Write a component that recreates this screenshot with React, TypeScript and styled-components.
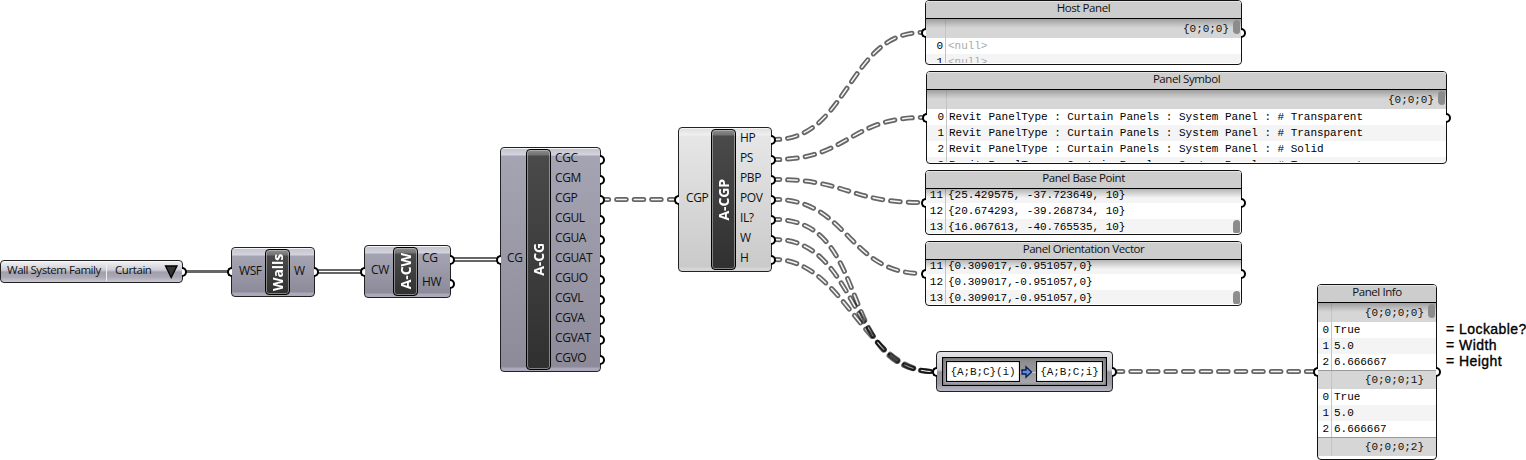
import React from "react";
import styled, { createGlobalStyle, css } from "styled-components";

const Global = createGlobalStyle`
  * { box-sizing: border-box; }
  body { margin: 0; background: #fff; overflow: hidden; }
`;

const Canvas = styled.main`
  position: relative;
  width: 1526px;
  height: 460px;
  overflow: hidden;
  background: #fff;
  color: #111;
  font: 11.5px/16px "Open Sans", "Noto Sans", sans-serif;
`;

const Wires = styled.svg`
  position: absolute;
  inset: 0;
`;

type Box = { $x: number; $y: number; $w: number; $h: number };

const placed = css<Box>`
  position: absolute;
  left: ${(p) => p.$x}px;
  top: ${(p) => p.$y}px;
  width: ${(p) => p.$w}px;
  height: ${(p) => p.$h}px;
`;

const violet = `linear-gradient(#c3c3cf 0, #d4d4de 7px, #a5a4b2 8px, #8d8b99 calc(100% - 4px), #aba9ba calc(100% - 3px))`;
const silver = `linear-gradient(#dedede 0, #f0f0f0 7px, #e6e6e6 8px, #cacaca calc(100% - 4px), #d6d6d6 calc(100% - 3px))`;

const Node = styled.section<Box & { $light?: boolean }>`
  ${placed}
  display: flex;
  border: 1px solid #222;
  border-radius: 4px;
  background: ${(p) => (p.$light ? silver : violet)};
  box-shadow: inset 0 1px 0 #f4f4f6;
`;

const Inputs = styled.div<{ $w: number }>`
  width: ${(p) => p.$w}px;
  display: flex;
  flex-direction: column;
  justify-content: center;
`;

const Outputs = styled.div`
  flex: 1;
  display: flex;
  flex-direction: column;
  justify-content: center;
`;

const PortRow = styled.div<{ $h: number; $pad: number }>`
  position: relative;
  height: ${(p) => p.$h}px;
  padding: 0 0 3px ${(p) => p.$pad}px;
  display: flex;
  align-items: center;
  font-size: 12px;
  letter-spacing: -0.4px;
`;

const Grip = styled.i<{ $side: "in" | "out"; $y?: string }>`
  position: absolute;
  top: calc(${(p) => p.$y ?? "50%"} - 5px);
  ${(p) => (p.$side === "in" ? "left: -5px;" : "right: -5px;")}
  width: 5px;
  height: 10px;
  border: 2px solid #000;
  background: #fff;
  ${(p) =>
    p.$side === "in"
      ? "border-right: 0; border-radius: 5px 0 0 5px;"
      : "border-left: 0; border-radius: 0 5px 5px 0;"}
`;

const Plate = styled.div`
  width: 25px;
  margin: 1px 0;
  display: flex;
  align-items: center;
  justify-content: center;
  border: 1px solid #000;
  border-radius: 4px;
  background: linear-gradient(#8d8d8d 0, #727272 5px, #4a4a4a 6px, #303030 100%);
  box-shadow: inset 0 0 0 1px rgba(200, 200, 200, 0.55);
  color: #fff;
`;

const PlateName = styled.span`
  writing-mode: vertical-rl;
  transform: rotate(180deg);
  font-size: 14px;
  font-weight: 700;
  line-height: 20px;
  letter-spacing: -0.1px;
  white-space: nowrap;
`;

const ValueList = styled.section<Box>`
  ${placed}
  display: flex;
  align-items: center;
  border: 1px solid #222;
  border-radius: 4px;
  background: linear-gradient(#f2f2f5 0, #cdcdd4 9px, #b9b9c2 10px, #a09fab 11px, #aaa8b5 16px, #cac9d2 21px);
  box-shadow: inset 0 1px 0 #fafafa;
`;

const ListName = styled.span`
  width: 106px;
  height: 19px;
  padding: 0 0 0 6px;
  border-right: 1px solid #eee;
  white-space: nowrap;
  letter-spacing: -0.46px;
`;

const ListValue = styled.span`
  width: 57px;
  height: 19px;
  padding: 0 0 0 8px;
  letter-spacing: -0.42px;
`;

const PanelBox = styled.section<Box>`
  ${placed}
  border: 1px solid #111;
  border-radius: 4px;
  background: #fff;
`;

const PanelTitle = styled.header`
  height: 18px;
  border-bottom: 1px solid #000;
  border-radius: 3px 3px 0 0;
  background: #cdcdcd;
  box-shadow: inset 0 1px 0 #e4e4e4;
  text-align: center;
  line-height: 14px;
  letter-spacing: -0.42px;
  white-space: nowrap;
`;

const PanelBody = styled.div<{ $scroll: number }>`
  position: relative;
  height: calc(100% - 19px);
  overflow: hidden;
  border-radius: 0 0 3px 3px;
  font: 11px/16px "Liberation Mono", monospace;
  letter-spacing: -0.03px;
  &::after {
    content: "";
    position: absolute;
    inset: 0 0 auto 0;
    height: 9px;
    background: linear-gradient(rgba(0, 0, 0, 0.26), rgba(0, 0, 0, 0));
  }
  & > div:first-child {
    margin-top: ${(p) => -p.$scroll}px;
  }
`;

const Line = styled.div<{ $gutter: number; $odd?: boolean }>`
  display: grid;
  grid-template-columns: ${(p) => p.$gutter}px 1fr;
  height: 16px;
  background: ${(p) => (p.$odd ? "#f4f4f4" : "#fff")};
`;

const Index = styled.span`
  border-right: 1px solid #c4c4c4;
  padding-right: 2px;
  text-align: right;
  color: #000;
`;

const Item = styled.span<{ $muted?: boolean }>`
  padding-left: 2px;
  white-space: pre;
  color: ${(p) => (p.$muted ? "#aaa" : "#000")};
`;

const Branch = styled.div<{ $gutter: number; $rule?: boolean }>`
  display: grid;
  grid-template-columns: ${(p) => p.$gutter}px 1fr;
  height: 19px;
  line-height: ${(p) => (p.$rule ? 18 : 20)}px;
  background: #d6d6d6;
  border-top: ${(p) => (p.$rule ? "1px solid #999" : "0")};
`;

const Path = styled.span`
  padding-right: 12px;
  text-align: right;
`;

const Thumb = styled.i<{ $top: number }>`
  position: absolute;
  z-index: 1;
  right: 1px;
  top: ${(p) => p.$top}px;
  width: 7px;
  height: 14px;
  border-radius: 4px 3px 3px 4px;
  background: #8c8c8c;
`;

const TreeNode = styled.section<Box>`
  ${placed}
  padding: 5px;
  border: 1px solid #222;
  border-radius: 4px;
  background: linear-gradient(#e4e4e8 0, #c9c9cf 18px, #96959f 20px, #9c9ba8 32px, #b9b8c6 39px);
`;

const TreeFrame = styled.div`
  height: 29px;
  padding: 3px;
  display: flex;
  align-items: center;
  justify-content: space-between;
  border: 1px solid #000;
  background: linear-gradient(#8a8a8a, #a9a8b0);
  box-shadow: inset 0 0 3px #555;
`;

const Rule = styled.div<{ $w: number }>`
  width: ${(p) => p.$w}px;
  height: 21px;
  border: 1px solid #000;
  background: #fff;
  text-align: center;
  font: 11px/20px "Liberation Mono", monospace;
  letter-spacing: -0.1px;
  box-shadow: inset 0 0 2px #aaa;
  white-space: nowrap;
`;

const Legend = styled.aside<Box>`
  ${placed}
  color: #000;
  font: 14px/16px "Liberation Sans", sans-serif;
  letter-spacing: 0.45px;
  white-space: nowrap;
  -webkit-text-stroke: 0.35px #000;
`;

/** S-curve between two grips; `bend` is the handle length as a share of the horizontal distance. */
function wirePath(x1: number, y1: number, x2: number, y2: number, bend: number) {
  const c = (x2 - x1) * bend;
  return `M${x1} ${y1}C${x1 + c} ${y1} ${x2 - c} ${y2} ${x2} ${y2}`;
}

const treeWires: [number, number, number, number, number][] = [
  [604, 199.5, 676, 199.51, 0.5],
  [775, 139.5, 922, 32.5, 0.5],
  [775, 159.5, 923, 117.5, 0.5],
  [775, 179.5, 922, 202.5, 0.5],
  [775, 199.5, 922, 273.5, 0.5],
  [775, 219.5, 934, 371.5, 0.62],
  [775, 239.5, 934, 371.5, 0.53],
  [775, 259.5, 934, 371.5, 0.43],
  [1118, 371.5, 1315, 371.51, 0.5],
];

function WireLayer() {
  return (
    <Wires width="1526" height="460">
      <g stroke="#666" fill="none">
        <path d="M185 271.5H229" strokeWidth="3" />
        <path d="M318 271.5H362M454 259.5H498" strokeWidth="5" />
        <path d="M318 271.5H362M454 259.5H498" strokeWidth="1.2" stroke="#fff" />
      </g>
      {treeWires.map(([a, b, c, d, bend], i) => {
        const path = wirePath(a, b, c, d, bend);
        const dash = { d: path, fill: "none", strokeLinecap: "round" as const, strokeDasharray: "9.6 8", strokeDashoffset: 5 };
        return (
          <g key={i}>
            <mask id={`wire${i}`} maskUnits="userSpaceOnUse" x="0" y="0" width="1526" height="460">
              <path {...dash} stroke="#fff" strokeWidth="5" />
              <path {...dash} stroke="#111" strokeWidth="1.5" />
            </mask>
            <rect width="1526" height="460" fill="rgba(0,0,0,0.6)" mask={`url(#wire${i})`} />
          </g>
        );
      })}
    </Wires>
  );
}

type ComponentProps = {
  box: [number, number, number, number];
  name: string;
  input: string;
  inW: number;
  inPad: number;
  outputs: string[];
  outPad: number;
  row?: number;
  light?: boolean;
};

function Component({ box: [x, y, w, h], name, input, inW, inPad, outputs, outPad, row = 20, light }: ComponentProps) {
  return (
    <Node $x={x} $y={y} $w={w} $h={h} $light={light}>
      <Inputs $w={inW}>
        <PortRow $h={row} $pad={inPad}>
          {input}
          <Grip $side="in" />
        </PortRow>
      </Inputs>
      <Plate>
        <PlateName>{name}</PlateName>
      </Plate>
      <Outputs>
        {outputs.map((o) => (
          <PortRow key={o} $h={row} $pad={outPad}>
            {o}
            <Grip $side="out" />
          </PortRow>
        ))}
      </Outputs>
    </Node>
  );
}

type Entry = { path: string; rule?: boolean } | { i: string; text: string; odd?: boolean; muted?: boolean };

type PanelProps = {
  box: [number, number, number, number];
  title: string;
  entries: Entry[];
  gutter?: number;
  scroll?: number;
  thumb: number;
  grip: number;
};

function Panel({ box: [x, y, w, h], title, entries, gutter = 20, scroll = 0, thumb, grip }: PanelProps) {
  return (
    <PanelBox $x={x} $y={y} $w={w} $h={h}>
      <PanelTitle>{title}</PanelTitle>
      <PanelBody $scroll={scroll}>
        {entries.map((e, k) =>
          "path" in e ? (
            <Branch key={k} $gutter={gutter} $rule={e.rule}>
              <Index />
              <Path>{e.path}</Path>
            </Branch>
          ) : (
            <Line key={k} $gutter={gutter} $odd={e.odd}>
              <Index>{e.i}</Index>
              <Item $muted={e.muted}>{e.text}</Item>
            </Line>
          )
        )}
        <Thumb $top={thumb} />
      </PanelBody>
      <Grip $side="in" $y={`${grip}px`} />
      <Grip $side="out" $y={`${grip}px`} />
    </PanelBox>
  );
}

const revit = "Revit PanelType : Curtain Panels : System Panel : # ";

export default function App() {
  return (
    <Canvas>
      <Global />
      <WireLayer />

      <ValueList $x={0} $y={260} $w={183} $h={23}>
        <ListName>Wall System Family</ListName>
        <ListValue>Curtain</ListValue>
        <svg width="15" height="14">
          <path d="M1.5 1h11.5L7.2 12.5Z" fill="#333" stroke="#000" strokeWidth="1.3" />
        </svg>
        <Grip $side="out" />
      </ValueList>

      <Component box={[231, 247, 84, 50]} name="Walls" input="WSF" inW={33} inPad={7} outputs={["W"]} outPad={4} />
      <Component box={[364, 245, 87, 53]} name="A-CW" input="CW" inW={28} inPad={6} outputs={["CG", "HW"]} outPad={4} row={24} />
      <Component
        box={[500, 147, 101, 225]}
        name="A-CG"
        input="CG"
        inW={25}
        inPad={6}
        outputs={["CGC", "CGM", "CGP", "CGUL", "CGUA", "CGUAT", "CGUO", "CGVL", "CGVA", "CGVAT", "CGVO"]}
        outPad={4}
      />
      <Component
        box={[678, 127, 94, 145]}
        name="A-CGP"
        input="CGP"
        inW={32}
        inPad={7}
        outputs={["HP", "PS", "PBP", "POV", "IL?", "W", "H"]}
        outPad={4}
        light
      />

      <Panel
        box={[925, 0, 317, 65]}
        title="Host Panel"
        thumb={1}
        grip={31.5}
        entries={[
          { path: "{0;0;0}" },
          { i: "0", text: "<null>", muted: true },
          { i: "1", text: "<null>", muted: true, odd: true },
        ]}
      />
      <Panel
        box={[926, 71, 521, 93]}
        title="Panel Symbol"
        thumb={1}
        grip={45.5}
        entries={[
          { path: "{0;0;0}" },
          { i: "0", text: revit + "Transparent" },
          { i: "1", text: revit + "Transparent", odd: true },
          { i: "2", text: revit + "Solid" },
          { i: "3", text: revit + "Transparent", odd: true },
        ]}
      />
      <Panel
        box={[925, 170, 317, 65]}
        title="Panel Base Point"
        scroll={2}
        thumb={31}
        grip={31.5}
        entries={[
          { i: "11", text: "{25.429575, -37.723649, 10}", odd: true },
          { i: "12", text: "{20.674293, -39.268734, 10}" },
          { i: "13", text: "{16.067613, -40.765535, 10}", odd: true },
        ]}
      />
      <Panel
        box={[925, 241, 317, 65]}
        title="Panel Orientation Vector"
        scroll={2}
        thumb={31}
        grip={31.5}
        entries={[
          { i: "11", text: "{0.309017,-0.951057,0}", odd: true },
          { i: "12", text: "{0.309017,-0.951057,0}" },
          { i: "13", text: "{0.309017,-0.951057,0}", odd: true },
        ]}
      />
      <Panel
        box={[1317, 284, 120, 176]}
        title="Panel Info"
        gutter={14}
        thumb={1}
        grip={86.5}
        entries={[
          { path: "{0;0;0;0}" },
          { i: "0", text: "True" },
          { i: "1", text: "5.0", odd: true },
          { i: "2", text: "6.666667" },
          { path: "{0;0;0;1}", rule: true },
          { i: "0", text: "True" },
          { i: "1", text: "5.0", odd: true },
          { i: "2", text: "6.666667" },
          { path: "{0;0;0;2}", rule: true },
        ]}
      />

      <TreeNode $x={936} $y={351} $w={177} $h={41}>
        <TreeFrame>
          <Rule $w={74}>{"{A;B;C}(i)"}</Rule>
          <svg width="16" height="14">
            <path d="M0 7.5h16" stroke="#ccc" />
            <path d="M2 5h4V1.8L11.5 7 6 12.2V9H2Z" fill="#5b8fe0" stroke="#0b1c4d" strokeWidth="1.3" />
          </svg>
          <Rule $w={67}>{"{A;B;C;i}"}</Rule>
        </TreeFrame>
        <Grip $side="in" />
        <Grip $side="out" />
      </TreeNode>

      <Legend $x={1446} $y={321} $w={80} $h={48}>
        <div>= Lockable?</div>
        <div>= Width</div>
        <div>= Height</div>
      </Legend>
    </Canvas>
  );
}
